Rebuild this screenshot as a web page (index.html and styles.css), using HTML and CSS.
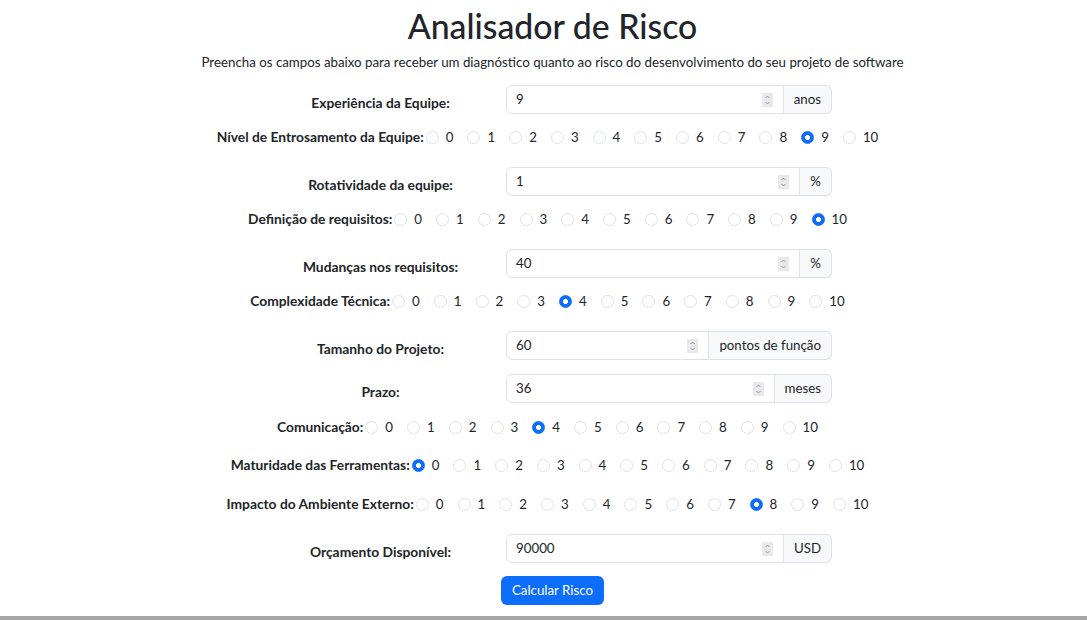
FILE: index.html
```html
<!DOCTYPE html>
<html lang="pt-BR">
<head>
<meta charset="utf-8">
<title>Analisador de Risco</title>
<link rel="stylesheet" href="styles.css">
</head>
<body>
<main class="page">
  <h1 class="title">Analisador de Risco</h1>
  <p class="subtitle">Preencha os campos abaixo para receber um diagnóstico quanto ao risco do desenvolvimento do seu projeto de software</p>

  <form class="form">
    <div class="field-row gap-13">
      <label class="field-label">Experiência da Equipe:</label>
      <div class="input-group">
        <div class="num"><input class="num-input" type="text" value="9"><svg class="spin" width="11" height="14" viewBox="0 0 11 14"><rect width="11" height="14" fill="#e9e9ed"/><path d="M3.5 5 L5.5 3 L7.5 5 M3.5 9 L5.5 11 L7.5 9" fill="none" stroke="#8f8f9d" stroke-width="0.9"/></svg></div>
        <span class="addon">anos</span>
      </div>
    </div>

    <div class="radio-row gap-11">
      <span class="radio-label">Nível de Entrosamento da Equipe:</span>
      <label class="opt"><input type="radio" name="entrosamento">0</label>
      <label class="opt"><input type="radio" name="entrosamento">1</label>
      <label class="opt"><input type="radio" name="entrosamento">2</label>
      <label class="opt"><input type="radio" name="entrosamento">3</label>
      <label class="opt"><input type="radio" name="entrosamento">4</label>
      <label class="opt"><input type="radio" name="entrosamento">5</label>
      <label class="opt"><input type="radio" name="entrosamento">6</label>
      <label class="opt"><input type="radio" name="entrosamento">7</label>
      <label class="opt"><input type="radio" name="entrosamento">8</label>
      <label class="opt"><input type="radio" name="entrosamento" checked>9</label>
      <label class="opt"><input type="radio" name="entrosamento">10</label>
    </div>

    <div class="field-row gap-18">
      <label class="field-label">Rotatividade da equipe:</label>
      <div class="input-group">
        <div class="num"><input class="num-input" type="text" value="1"><svg class="spin" width="11" height="14" viewBox="0 0 11 14"><rect width="11" height="14" fill="#e9e9ed"/><path d="M3.5 5 L5.5 3 L7.5 5 M3.5 9 L5.5 11 L7.5 9" fill="none" stroke="#8f8f9d" stroke-width="0.9"/></svg></div>
        <span class="addon">%</span>
      </div>
    </div>

    <div class="radio-row gap-11">
      <span class="radio-label">Definição de requisitos:</span>
      <label class="opt"><input type="radio" name="requisitos">0</label>
      <label class="opt"><input type="radio" name="requisitos">1</label>
      <label class="opt"><input type="radio" name="requisitos">2</label>
      <label class="opt"><input type="radio" name="requisitos">3</label>
      <label class="opt"><input type="radio" name="requisitos">4</label>
      <label class="opt"><input type="radio" name="requisitos">5</label>
      <label class="opt"><input type="radio" name="requisitos">6</label>
      <label class="opt"><input type="radio" name="requisitos">7</label>
      <label class="opt"><input type="radio" name="requisitos">8</label>
      <label class="opt"><input type="radio" name="requisitos">9</label>
      <label class="opt"><input type="radio" name="requisitos" checked>10</label>
    </div>

    <div class="field-row gap-18">
      <label class="field-label">Mudanças nos requisitos:</label>
      <div class="input-group">
        <div class="num"><input class="num-input" type="text" value="40"><svg class="spin" width="11" height="14" viewBox="0 0 11 14"><rect width="11" height="14" fill="#e9e9ed"/><path d="M3.5 5 L5.5 3 L7.5 5 M3.5 9 L5.5 11 L7.5 9" fill="none" stroke="#8f8f9d" stroke-width="0.9"/></svg></div>
        <span class="addon">%</span>
      </div>
    </div>

    <div class="radio-row gap-11">
      <span class="radio-label">Complexidade Técnica:</span>
      <label class="opt"><input type="radio" name="complexidade">0</label>
      <label class="opt"><input type="radio" name="complexidade">1</label>
      <label class="opt"><input type="radio" name="complexidade">2</label>
      <label class="opt"><input type="radio" name="complexidade">3</label>
      <label class="opt"><input type="radio" name="complexidade" checked>4</label>
      <label class="opt"><input type="radio" name="complexidade">5</label>
      <label class="opt"><input type="radio" name="complexidade">6</label>
      <label class="opt"><input type="radio" name="complexidade">7</label>
      <label class="opt"><input type="radio" name="complexidade">8</label>
      <label class="opt"><input type="radio" name="complexidade">9</label>
      <label class="opt"><input type="radio" name="complexidade">10</label>
    </div>

    <div class="field-row gap-18">
      <label class="field-label">Tamanho do Projeto:</label>
      <div class="input-group">
        <div class="num"><input class="num-input" type="text" value="60"><svg class="spin" width="11" height="14" viewBox="0 0 11 14"><rect width="11" height="14" fill="#e9e9ed"/><path d="M3.5 5 L5.5 3 L7.5 5 M3.5 9 L5.5 11 L7.5 9" fill="none" stroke="#8f8f9d" stroke-width="0.9"/></svg></div>
        <span class="addon">pontos de função</span>
      </div>
    </div>

    <div class="field-row gap-14">
      <label class="field-label">Prazo:</label>
      <div class="input-group">
        <div class="num"><input class="num-input" type="text" value="36"><svg class="spin" width="11" height="14" viewBox="0 0 11 14"><rect width="11" height="14" fill="#e9e9ed"/><path d="M3.5 5 L5.5 3 L7.5 5 M3.5 9 L5.5 11 L7.5 9" fill="none" stroke="#8f8f9d" stroke-width="0.9"/></svg></div>
        <span class="addon">meses</span>
      </div>
    </div>

    <div class="radio-row gap-12">
      <span class="radio-label">Comunicação:</span>
      <label class="opt"><input type="radio" name="comunicacao">0</label>
      <label class="opt"><input type="radio" name="comunicacao">1</label>
      <label class="opt"><input type="radio" name="comunicacao">2</label>
      <label class="opt"><input type="radio" name="comunicacao">3</label>
      <label class="opt"><input type="radio" name="comunicacao" checked>4</label>
      <label class="opt"><input type="radio" name="comunicacao">5</label>
      <label class="opt"><input type="radio" name="comunicacao">6</label>
      <label class="opt"><input type="radio" name="comunicacao">7</label>
      <label class="opt"><input type="radio" name="comunicacao">8</label>
      <label class="opt"><input type="radio" name="comunicacao">9</label>
      <label class="opt"><input type="radio" name="comunicacao">10</label>
    </div>

    <div class="radio-row gap-14">
      <span class="radio-label">Maturidade das Ferramentas:</span>
      <label class="opt"><input type="radio" name="maturidade" checked>0</label>
      <label class="opt"><input type="radio" name="maturidade">1</label>
      <label class="opt"><input type="radio" name="maturidade">2</label>
      <label class="opt"><input type="radio" name="maturidade">3</label>
      <label class="opt"><input type="radio" name="maturidade">4</label>
      <label class="opt"><input type="radio" name="maturidade">5</label>
      <label class="opt"><input type="radio" name="maturidade">6</label>
      <label class="opt"><input type="radio" name="maturidade">7</label>
      <label class="opt"><input type="radio" name="maturidade">8</label>
      <label class="opt"><input type="radio" name="maturidade">9</label>
      <label class="opt"><input type="radio" name="maturidade">10</label>
    </div>

    <div class="radio-row gap-15">
      <span class="radio-label">Impacto do Ambiente Externo:</span>
      <label class="opt"><input type="radio" name="impacto">0</label>
      <label class="opt"><input type="radio" name="impacto">1</label>
      <label class="opt"><input type="radio" name="impacto">2</label>
      <label class="opt"><input type="radio" name="impacto">3</label>
      <label class="opt"><input type="radio" name="impacto">4</label>
      <label class="opt"><input type="radio" name="impacto">5</label>
      <label class="opt"><input type="radio" name="impacto">6</label>
      <label class="opt"><input type="radio" name="impacto">7</label>
      <label class="opt"><input type="radio" name="impacto" checked>8</label>
      <label class="opt"><input type="radio" name="impacto">9</label>
      <label class="opt"><input type="radio" name="impacto">10</label>
    </div>

    <div class="field-row gap-18">
      <label class="field-label">Orçamento Disponível:</label>
      <div class="input-group">
        <div class="num"><input class="num-input" type="text" value="90000"><svg class="spin" width="11" height="14" viewBox="0 0 11 14"><rect width="11" height="14" fill="#e9e9ed"/><path d="M3.5 5 L5.5 3 L7.5 5 M3.5 9 L5.5 11 L7.5 9" fill="none" stroke="#8f8f9d" stroke-width="0.9"/></svg></div>
        <span class="addon">USD</span>
      </div>
    </div>

    <div class="actions gap-13">
      <button type="button" class="btn">Calcular Risco</button>
    </div>
  </form>
</main>
<div class="bottom-bar"></div>
</body>
</html>
```

FILE: styles.css
```css
* { box-sizing: border-box; }

html, body {
  margin: 0;
  padding: 0;
  background: #ffffff;
}

body {
  font-family: Lato, "Noto Sans", sans-serif;
  font-size: 13.3px;
  color: #212529;
  line-height: 20px;
}

.page {
  display: flex;
  flex-direction: column;
  align-items: center;
  padding-left: 18px;
}

.title {
  margin: 6px 0 0;
  font-size: 33.8px;
  line-height: 40px;
  font-weight: 500;
  color: #212529;
}

.subtitle {
  margin: 6px 0 0;
  font-size: 13.3px;
  line-height: 20px;
}

.form {
  display: flex;
  flex-direction: column;
  align-items: center;
  width: 100%;
}

.gap-11 { margin-top: 11px; }
.gap-12 { margin-top: 12px; }
.gap-13 { margin-top: 13px; }
.gap-14 { margin-top: 14px; }
.gap-15 { margin-top: 15px; }
.gap-18 { margin-top: 18px; }

.field-row {
  display: flex;
  align-items: center;
  width: 577px;
  margin-right: 18px;
}

.field-label {
  width: 251px;
  text-align: center;
  font-weight: 700;
  font-size: 13.8px;
  padding-top: 7px;
}

.input-group {
  display: flex;
  width: 326px;
  height: 29px;
}

.num {
  flex: 1;
  display: flex;
  align-items: center;
  border: 1px solid #dee2e6;
  border-radius: 6px 0 0 6px;
  padding: 0 10px 0 9px;
  min-width: 0;
}

.num-input {
  flex: 1;
  min-width: 0;
  border: 0;
  outline: none;
  padding: 0;
  margin: 0;
  font: inherit;
  color: #212529;
  background: transparent;
  height: 20px;
  margin-top: -2px;
}

.spin {
  flex: none;
  display: block;
  margin-top: 1px;
}

.addon {
  display: flex;
  align-items: center;
  padding: 0 10px 1px;
  background: #f8f9fa;
  border: 1px solid #dee2e6;
  border-left: 0;
  border-radius: 0 6px 6px 0;
  white-space: nowrap;
}

.radio-row {
  display: flex;
  align-items: center;
  justify-content: center;
  height: 24px;
  padding-left: 4px;
}

.radio-label {
  font-weight: 700;
  font-size: 13.8px;
  margin-right: 2px;
}

.opt {
  display: inline-flex;
  align-items: center;
  margin-right: 14px;
}

.opt input {
  appearance: none;
  -webkit-appearance: none;
  width: 13px;
  height: 13px;
  margin: 0 7px 0 0;
  border: 1px solid #dee2e6;
  border-radius: 50%;
  background: #fff;
  flex: none;
}

.opt input:checked {
  border-color: #0d6efd;
  background: radial-gradient(circle, #fff 0 2.3px, #0d6efd 2.8px);
}

.actions {
  display: flex;
  justify-content: center;
}

.btn {
  height: 29px;
  padding: 0 11px 1px;
  border: 0;
  border-radius: 6px;
  background: #0d6efd;
  color: #fff;
  font: inherit;
  cursor: pointer;
}

.bottom-bar {
  margin-top: 11px;
  height: 4px;
  background: #a6a6a6;
}
```
